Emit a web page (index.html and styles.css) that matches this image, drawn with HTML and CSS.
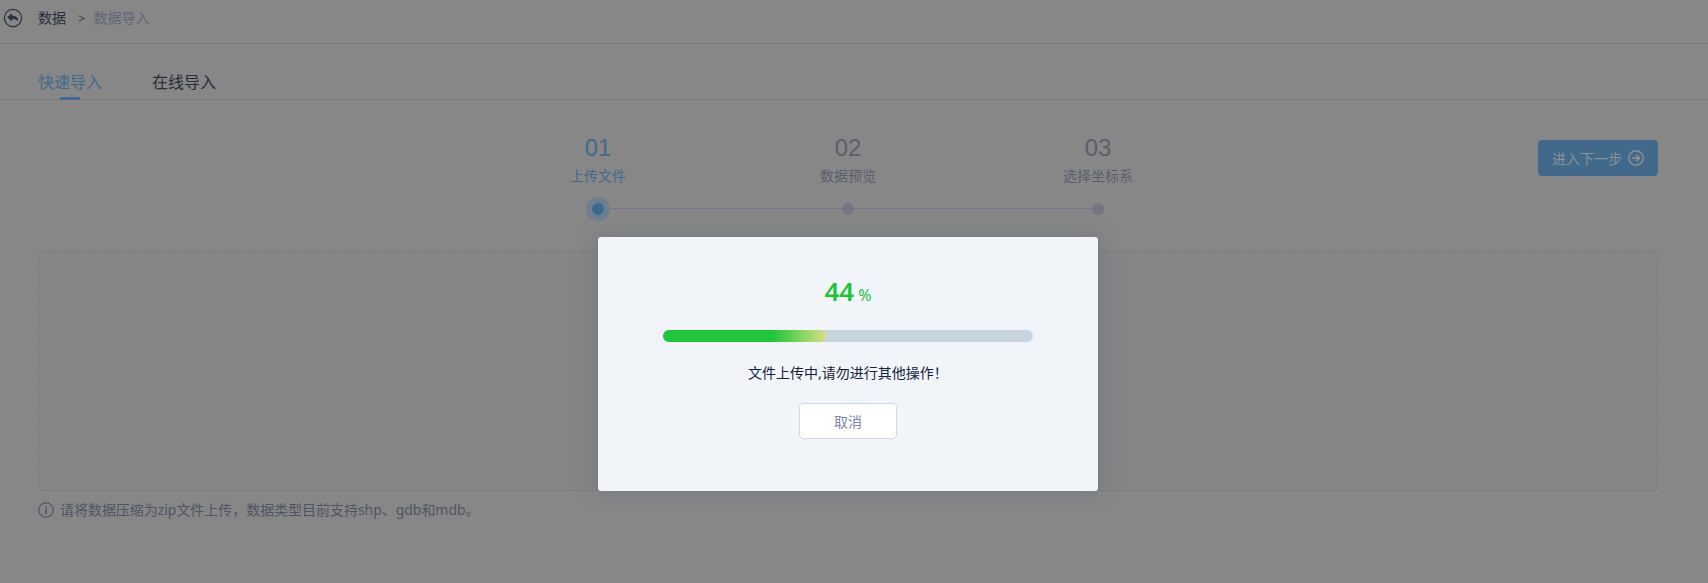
FILE: index.html
```html
<!DOCTYPE html>
<html lang="zh-CN">
<head>
<meta charset="utf-8">
<title>数据导入</title>
<link rel="stylesheet" href="styles.css">
</head>
<body>
<div class="page">
  <header class="crumbs">
    <svg class="back" viewBox="0 0 20 20" width="20" height="20">
      <circle cx="10" cy="10" r="8.6" fill="none" stroke="currentColor" stroke-width="1.2"/>
      <path d="M4.200 9.300 9 5.200v2.500c4 .1 6.500 1.800 6.500 5.800-1.400-1.700-3.200-2.300-6.500-2.300v2.300z" fill="currentColor"/>
    </svg>
    <span class="crumb-root">数据</span>
    <span class="crumb-sep">&gt;</span>
    <span class="crumb-leaf">数据导入</span>
  </header>
  <nav class="tabs">
    <div class="tab tab-active">快速导入</div>
    <div class="tab">在线导入</div>
  </nav>
  <main class="main">
    <div class="top">
      <div class="steps">
        <div class="step step-active"><div class="num">01</div><div class="name">上传文件</div><div class="rail"><i class="dot"></i></div></div>
        <div class="step"><div class="num">02</div><div class="name">数据预览</div><div class="rail"><i class="dot"></i></div></div>
        <div class="step"><div class="num">03</div><div class="name">选择坐标系</div><div class="rail"><i class="dot"></i></div></div>
      </div>
      <div class="next">
        <span class="next-label">进入下一步</span>
        <svg viewBox="0 0 16 16" width="16" height="16" fill="none" stroke="currentColor" stroke-width="1.4">
          <circle cx="8" cy="8" r="7.200"/>
          <path d="M4 8h7M8.400 5 11.400 8l-3 3" stroke-width="1.700"/>
        </svg>
      </div>
    </div>
    <div class="drop"></div>
    <div class="hint">
      <svg viewBox="0 0 16 16" width="16" height="16">
        <circle cx="8" cy="8" r="7.200" fill="none" stroke="currentColor" stroke-width="1.200"/>
        <path d="M7.200 3.800h1.600v1.600H7.200zM7.200 6.500h1.600v5.700H7.200z" fill="currentColor"/>
      </svg>
      <span>请将数据压缩为zip文件上传，数据类型目前支持shp、gdb和mdb。</span>
    </div>
  </main>
</div>
<div class="modal">
  <div class="percent"><b>44</b><span>%</span></div>
  <div class="bar"><div class="fill" style="width:44%"></div></div>
  <div class="message">文件上传中,请勿进行其他操作！</div>
  <div class="cancel">取消</div>
</div>
</body>
</html>
```
FILE: styles.css
```css
* { box-sizing: border-box; }
body {
  margin: 0;
  height: 583px;
  overflow: hidden;
  background: #878787;
  font: 14px/20px "Noto Sans", "Noto Sans CJK SC", sans-serif;
  color: #5a5e6e;
}
.crumbs {
  display: flex;
  align-items: center;
  height: 44px;
  padding: 0 0 8px 3px;
  border-bottom: 1px solid #757785;
}
.back { color: #2c3142; }
.crumb-root { margin-left: 15px; color: #272d3b; }
.crumb-sep { margin: 0 8px 0 12px; font-size: 13px; color: #343946; }
.crumb-leaf { color: #626577; }
.tabs {
  display: flex;
  gap: 50px;
  height: 56px;
  padding: 24px 0 0 38px;
  border-bottom: 1px solid #777985;
  font-size: 16px;
  line-height: 28px;
  color: #272d3b;
}
.tab { height: 32px; display: flex; flex-direction: column; align-items: center; }
.tab-active { color: #40698c; }
.tab-active::after { content: ""; width: 20px; height: 3px; margin-top: 1px; background: #40698c; flex: none; }
.main { padding: 0 50px 0 38px; }
.top {
  display: grid;
  grid-template-columns: 1fr 750px 1fr;
  height: 151px;
  padding-top: 33px;
}
.steps { grid-column: 2; display: grid; grid-template-columns: repeat(3, 250px); }
.step { text-align: center; }
.num { font: 24px/30px "Liberation Sans", Arial, sans-serif; }
.name { margin-top: 2px; line-height: 22px; }
.rail {
  display: flex;
  align-items: center;
  justify-content: center;
  height: 24px;
  margin-top: 10px;
  background: linear-gradient(#757786, #757786) 0 11px / 100% 1px no-repeat;
}
.step:first-child .rail { background-position: 125px 11px; }
.step:last-child .rail { background-size: 125px 1px; }
.dot { width: 12px; height: 12px; border-radius: 50%; background: #747781; }
.step-active { color: #40698c; }
.step-active .dot { width: 24px; height: 24px; border: 6px solid #6d7f8e; background: #3c698e; }
.next {
  grid-column: 3;
  justify-self: end;
  display: flex;
  align-items: center;
  gap: 6px;
  width: 120px;
  height: 36px;
  margin-top: 7px;
  padding-left: 14px;
  border-radius: 4px;
  background: #40698b;
  color: #8e9194;
}
.next-label { padding-top: 1px; }
.drop { height: 240px; border: 1px dashed #77787a; border-radius: 5px; background: #858585; }
.hint { display: flex; align-items: center; gap: 6px; margin-top: 9px; color: #505464; letter-spacing: -.04px; }
.modal {
  position: absolute;
  left: 598px;
  top: 237px;
  display: flex;
  flex-direction: column;
  align-items: center;
  width: 500px;
  height: 254px;
  padding-top: 36px;
  border-radius: 3px;
  background: #f1f5f9;
  box-shadow: 0 0 20px rgba(95, 106, 122, .6);
}
.percent { display: flex; align-items: baseline; gap: 4px; height: 36px; line-height: 36px; color: #1fc438; }
.percent b { font-size: 26px; font-weight: 600; }
.percent span { font-size: 16px; }
.bar { width: 370px; height: 12px; margin-top: 21px; border-radius: 6px; background: #c7d4de; }
.fill { height: 12px; border-radius: 6px; background: linear-gradient(90deg, #1fc638 67%, #d7e085); }
.message { margin-top: 21px; color: #14213d; }
.cancel {
  width: 98px;
  height: 36px;
  margin-top: 20px;
  border: 1px solid #cfd9e8;
  border-radius: 4px;
  background: #fff;
  color: #7d86ab;
  line-height: 36px;
  text-align: center;
}
```
